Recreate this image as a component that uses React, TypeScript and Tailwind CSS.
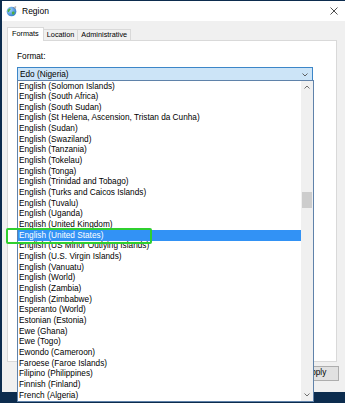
import React from "react";

const items = [
  "English (Solomon Islands)",
  "English (South Africa)",
  "English (South Sudan)",
  "English (St Helena, Ascension, Tristan da Cunha)",
  "English (Sudan)",
  "English (Swaziland)",
  "English (Tanzania)",
  "English (Tokelau)",
  "English (Tonga)",
  "English (Trinidad and Tobago)",
  "English (Turks and Caicos Islands)",
  "English (Tuvalu)",
  "English (Uganda)",
  "English (United Kingdom)",
  "English (United States)",
  "English (US Minor Outlying Islands)",
  "English (U.S. Virgin Islands)",
  "English (Vanuatu)",
  "English (World)",
  "English (Zambia)",
  "English (Zimbabwe)",
  "Esperanto (World)",
  "Estonian (Estonia)",
  "Ewe (Ghana)",
  "Ewe (Togo)",
  "Ewondo (Cameroon)",
  "Faroese (Faroe Islands)",
  "Filipino (Philippines)",
  "Finnish (Finland)",
  "French (Algeria)",
];

const SELECTED = 14;

function GlobeIcon() {
  return (
    <svg width="11" height="11" viewBox="0 0 12 12">
      <defs>
        <radialGradient id="g" cx="0.35" cy="0.35" r="0.8">
          <stop offset="0" stopColor="#9fd3ff" />
          <stop offset="1" stopColor="#1f6fc4" />
        </radialGradient>
      </defs>
      <circle cx="6" cy="6" r="5.3" fill="url(#g)" />
      <path d="M3 3.2 C4.2 2.4 5.4 3 5 4.2 C4.6 5.2 3.6 5 3.4 6.2 C3.2 7 2.2 6.6 1.8 5.6 C1.6 4.6 2.2 3.8 3 3.2 Z" fill="#4caf3f" />
      <path d="M7 6.2 C8.2 5.8 9.6 6.4 9.4 7.6 C9.2 8.8 8 9.8 7.2 9.4 C6.6 9 6.8 8 6.4 7.4 C6.2 6.8 6.4 6.4 7 6.2 Z" fill="#4caf3f" />
      <path d="M8 1.8 L10.8 0.6 L10.2 2.8 Z" fill="#e8e8e8" stroke="#555" strokeWidth="0.4" />
    </svg>
  );
}

function Chevron({ up = false, color = "#404040" }: { up?: boolean; color?: string }) {
  return (
    <svg width="6" height="4" viewBox="0 0 6 4">
      {up ? (
        <path d="M0.5 3.5 L3 1 L5.5 3.5" fill="none" stroke={color} strokeWidth="0.9" />
      ) : (
        <path d="M0.5 0.5 L3 3 L5.5 0.5" fill="none" stroke={color} strokeWidth="0.9" />
      )}
    </svg>
  );
}

export default function App() {
  return (
    <div className="relative w-[345px] h-[403px] overflow-hidden bg-[#0c2c4e] font-['Liberation_Sans',Arial,sans-serif] text-black">
      {/* window */}
      <div className="ml-[2px] mt-[1px] w-[343px] h-[391px] bg-[#f0f0f0] flex flex-col">
        {/* title bar */}
        <div className="h-[20px] bg-white flex items-center shrink-0">
          <div className="ml-[4px] w-[11px] h-[11px] flex items-center justify-center">
            <GlobeIcon />
          </div>
          <span className="ml-[5px] text-[8.5px] leading-none">Region</span>
          <div className="ml-auto mr-[6px] w-[10px] h-[10px] flex items-center justify-center">
            <svg width="8" height="8" viewBox="0 0 8 8">
              <path d="M0.5 0.5 L7.5 7.5 M7.5 0.5 L0.5 7.5" stroke="#222" strokeWidth="0.8" />
            </svg>
          </div>
        </div>

        {/* tabs */}
        <div className="mt-[6px] ml-[5px] flex items-end h-[13px] relative z-10">
          <div className="h-[14px] -mb-px px-[4px] bg-white border border-b-0 border-[#d9d9d9] flex items-center text-[7.3px]">
            Formats
          </div>
          <div className="h-[11px] px-[3px] border-t border-r border-[#d9d9d9] flex items-center text-[7.3px]">
            Location
          </div>
          <div className="h-[11px] px-[3px] border-t border-r border-[#d9d9d9] flex items-center text-[7.3px]">
            Administrative
          </div>
        </div>

        {/* tab panel */}
        <div className="ml-[5px] w-[330px] h-[322px] bg-white border border-[#d9d9d9] flex flex-col">
          <div className="mt-[12px] ml-[9px] text-[8.25px] leading-none">Format:</div>
          <div className="mt-[6px] ml-[9px] w-[296px] h-[16px] bg-[#cce4f7] border border-[#3c86c8] flex items-center">
            <span className="ml-[2px] text-[8.25px] leading-none">Edo (Nigeria)</span>
            <div className="ml-auto mr-[4px] flex items-center">
              <Chevron color="#505050" />
            </div>
          </div>
        </div>

        {/* buttons row */}
        <div className="mt-[4px] flex justify-end pr-[6px]">
          <div className="w-[46px] h-[15px] bg-[#e1e1e1] border border-[#adadad] flex items-center justify-center text-[8.25px]">
            Apply
          </div>
        </div>
      </div>

      {/* dropdown list overlay */}
      <div className="absolute left-[17px] top-[80px] w-[297px] h-[322px] bg-white border border-[#5f82aa] flex overflow-hidden">
        <div className="flex-1 flex flex-col pt-[0.3px]">
          {items.map((it, i) => (
            <div
              key={it}
              className={
                i === SELECTED
                  ? "h-[10.67px] shrink-0 flex items-center pl-[1px] bg-[#3292f5] text-white text-[8.25px] leading-none"
                  : "h-[10.67px] shrink-0 flex items-center pl-[1px] text-[8.25px] leading-none"
              }
            >
              {it}
            </div>
          ))}
        </div>
        {/* scrollbar */}
        <div className="w-[12px] bg-[#f0f0f0] flex flex-col items-center shrink-0">
          <div className="h-[12px] flex items-center justify-center">
            <Chevron up color="#606060" />
          </div>
          <div className="mt-[99px] w-[10px] h-[16px] bg-[#cdcdcd]" />
          <div className="mt-auto h-[12px] flex items-center justify-center">
            <Chevron color="#606060" />
          </div>
        </div>
      </div>

      {/* green highlight box */}
      <div className="absolute left-[6px] top-[228px] w-[146px] h-[16px] border-2 border-[#2fcf2f] rounded-[2px]" />
    </div>
  );
}
